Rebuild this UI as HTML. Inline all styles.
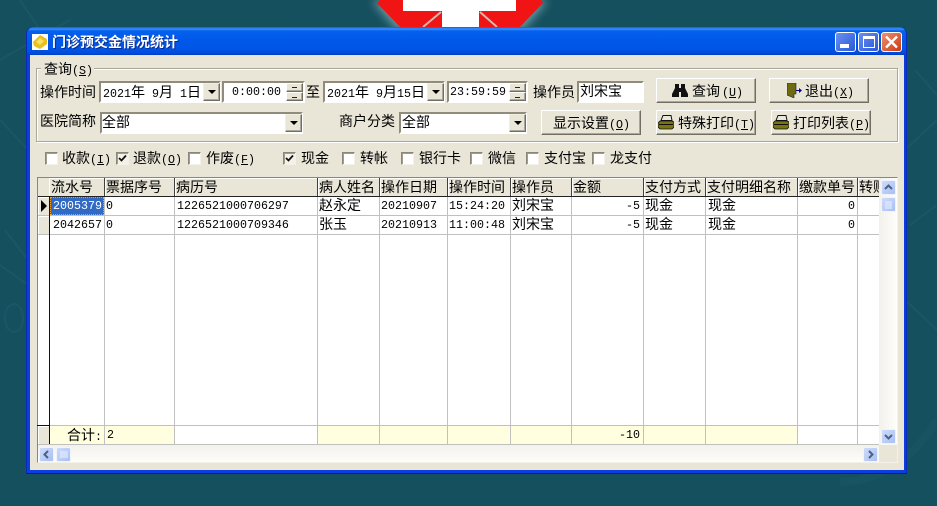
<!DOCTYPE html>
<html><head><meta charset="utf-8">
<style>
html,body{margin:0;padding:0}
body{width:937px;height:506px;overflow:hidden;background:#15505f;position:relative;font-family:"Liberation Sans","WenQuanYi Zen Hei","Noto Sans CJK SC",sans-serif;font-size:14px;color:#000}
div,span.a{position:absolute;box-sizing:border-box}
.t{white-space:nowrap;line-height:16px;height:16px}
.d{font-family:"Liberation Mono",monospace;font-size:11.67px}
.u{text-decoration:underline}
.in{background:#fff;border:2px solid;border-color:#8f8c7c #fff #fff #8f8c7c}
.bt{background:#e9e6d8;border:1px solid;border-color:#fff #716f64 #716f64 #fff;box-shadow:inset -1px -1px 0 #aca899}
.dd{background:#e9e6d8;border:1px solid;border-color:#f1efe2 #716f64 #716f64 #f1efe2;box-shadow:inset -1px -1px 0 #aca899}
.dd:after{content:"";position:absolute;left:4px;top:6px;border:4px solid transparent;border-top:4px solid #000;border-bottom:0}
.cb{width:13px;height:13px;background:#fff;border:1px solid;border-color:#8a8778 #f4f2e8 #f4f2e8 #8a8778;box-shadow:inset 1px 1px 0 #a09d8e}
.cb.c{background:#f4f2e8}
.vl{width:1px;background:#c0c0c0;top:178px;height:266px}
.hl{height:1px;background:#c0c0c0;left:38px;width:841px}
.hd{background:#e9e6d8;top:178px;height:18px;border-right:1px solid #404040;border-left:1px solid #fff;box-shadow:inset 0 1px 0 #fff}
.y{background:#ffffdf;top:426px;height:18px}
.xb{background:linear-gradient(135deg,#cddbfb,#a9c0f4);border:1px solid #eef3fd;border-radius:2px}
.w{border:1px solid #fff;border-radius:3px;top:32px;height:20px}
</style></head><body>

<svg style="position:absolute;left:0;top:0" width="937" height="506">
<defs><filter id="b"><feGaussianBlur stdDeviation="5"/></filter></defs>
<g stroke="#2a6676" stroke-width="2" fill="none" opacity=".3">
<path d="M0 60 L70 20 M20 0 L60 60 M0 120 L28 150 M5 230 L28 260 M28 285 L0 265"/>
<path d="M905 150 L937 120 M910 225 L937 205 M905 300 L937 330 M915 70 L937 95"/>
<path d="M840 482 Q900 480 937 420" stroke-width="8" opacity=".6"/>
<ellipse cx="14" cy="318" rx="9" ry="14"/>
</g>
<polygon points="372,0 548,0 522,30 398,30" fill="#9fc4c8" filter="url(#b)" opacity=".7"/>
<polygon points="377,3 380,0 541,0 543,3 520,27 400,27" fill="#f01414"/>
<polygon points="403,0 516,0 516,11 479,11 479,27 442,27 442,11 403,11" fill="#fff"/>
<path d="M441 12 L423 27 M480 12 L497 27" stroke="#d8b8b0" stroke-width="2"/>
</svg>

<!-- window frame -->
<div style="left:26px;top:27px;width:881px;height:447px;background:#0a3ee0;border-radius:7px 7px 0 0;border-bottom:1px solid #001a90;border-left:1px solid #0a2ab8;border-right:1px solid #0a2ab8"></div>
<div style="left:27px;top:27px;width:879px;height:28px;border-radius:7px 7px 0 0;background:linear-gradient(#0a5be6 0,#3a90ff 2px,#0560ee 4px,#0058e8 14px,#0055e6 22px,#0048d8 27px,#0038b8 28px)"></div>
<div style="left:30px;top:55px;width:874px;height:415px;background:#e9e6d8"></div>

<!-- title -->
<div style="left:32px;top:34px;width:16px;height:16px;background:#fff"></div>
<svg style="position:absolute;left:32px;top:34px" width="16" height="16"><polygon points="1,8 8,1 15,5 15,10 8,15 2,12" fill="#e8c020"/><polygon points="4,8 8,4 12,7 8,11" fill="#f8e060"/></svg>
<div class="t" style="left:53px;top:35px;color:#0a2a90;font-weight:bold">门诊预交金情况统计</div>
<div class="t" style="left:52px;top:34px;color:#fff;font-weight:bold">门诊预交金情况统计</div>

<div class="w" style="left:835px;width:21px;background:linear-gradient(135deg,#6a90f0,#2a58d8)"></div>
<div style="left:840px;top:44px;width:9px;height:4px;background:#fff"></div>
<div class="w" style="left:858px;width:21px;background:linear-gradient(135deg,#6a90f0,#2a58d8)"></div>
<div style="left:863px;top:36px;width:12px;height:12px;border:1px solid #fff;border-top:3px solid #fff"></div>
<div class="w" style="left:881px;width:21px;background:linear-gradient(135deg,#f09070,#c83a14)"></div>
<svg style="position:absolute;left:881px;top:32px" width="21" height="20"><path d="M5 4.500L16 15.500M16 4.500L5 15.500" stroke="#fff" stroke-width="2.400"/></svg>

<!-- group box -->
<div style="left:36px;top:68px;width:862px;height:74px;border:1px solid #aca899;box-shadow:1px 1px 0 #fff,inset 1px 1px 0 #fff"></div>
<div class="t" style="left:41px;top:61px;width:53px;padding-left:3px;background:#e9e6d8">查询<span class="d">(<span class="u">S</span>)</span></div>

<div class="t" style="left:40px;top:84px">操作时间</div>
<div class="in" style="left:99px;top:81px;width:122px;height:22px"></div>
<div class="t" style="left:103px;top:84px"><span class="d">2021</span>年<span class="d">&nbsp;9</span>月<span class="d">&nbsp;1</span>日</div>
<div class="dd" style="left:203px;top:83px;width:17px;height:18px"></div>

<div class="in" style="left:222px;top:81px;width:83px;height:22px"></div>
<div class="t d" style="left:232px;top:84px">0:00:00</div>
<div class="bt" style="left:286px;top:83px;width:17px;height:9px"></div>
<div class="bt" style="left:286px;top:92px;width:17px;height:9px"></div>
<div style="left:292px;top:87px;width:5px;height:1px;background:#222"></div>
<div style="left:292px;top:97px;width:5px;height:1px;background:#222"></div>

<div class="t" style="left:306px;top:84px">至</div>
<div class="in" style="left:323px;top:81px;width:122px;height:22px"></div>
<div class="t" style="left:327px;top:84px"><span class="d">2021</span>年<span class="d">&nbsp;9</span>月<span class="d">15</span>日</div>
<div class="dd" style="left:427px;top:83px;width:17px;height:18px"></div>

<div class="in" style="left:447px;top:81px;width:81px;height:22px"></div>
<div class="t d" style="left:450px;top:84px">23:59:59</div>
<div class="bt" style="left:509px;top:83px;width:17px;height:9px"></div>
<div class="bt" style="left:509px;top:92px;width:17px;height:9px"></div>
<div style="left:515px;top:87px;width:5px;height:1px;background:#222"></div>
<div style="left:515px;top:97px;width:5px;height:1px;background:#222"></div>

<div class="t" style="left:533px;top:84px">操作员</div>
<div class="in" style="left:577px;top:81px;width:67px;height:22px"></div>
<div class="t" style="left:580px;top:83px">刘宋宝</div>

<div class="bt" style="left:656px;top:78px;width:100px;height:25px"></div>
<svg style="position:absolute;left:672px;top:84px" width="16" height="13"><path d="M3 0h4v4h2V0h4v4l3 6v3H9V8H7v5H0v-3l3-6z" fill="#111"/></svg>
<div class="t" style="left:692px;top:83px">查询<span class="d" style="margin-left:2px">(<span class="u">U</span>)</span></div>

<div class="bt" style="left:769px;top:78px;width:100px;height:25px"></div>
<svg style="position:absolute;left:787px;top:83px" width="16" height="15"><path d="M0 0h9v11H7v4L0 12z" fill="#6e6a10" stroke="#222" stroke-width=".6"/><path d="M9 7h3V5l3 2.500-3 2.500V8H9z" fill="#000090"/></svg>
<div class="t" style="left:805px;top:83px">退出<span class="d">(<span class="u">X</span>)</span></div>

<div class="t" style="left:40px;top:113px">医院简称</div>
<div class="in" style="left:100px;top:112px;width:203px;height:22px"></div>
<div class="t" style="left:102px;top:114px">全部</div>
<div class="dd" style="left:285px;top:114px;width:17px;height:18px"></div>

<div class="t" style="left:339px;top:113px">商户分类</div>
<div class="in" style="left:399px;top:112px;width:128px;height:22px"></div>
<div class="t" style="left:402px;top:114px">全部</div>
<div class="dd" style="left:509px;top:114px;width:17px;height:18px"></div>

<div class="bt" style="left:541px;top:110px;width:100px;height:25px"></div>
<div class="t" style="left:553px;top:115px">显示设置<span class="d">(<span class="u">O</span>)</span></div>

<div class="bt" style="left:656px;top:110px;width:100px;height:25px"></div>
<svg style="position:absolute;left:658px;top:115px" width="16" height="15"><path d="M5 0.500h8l1 5H3z" fill="#e8e8e0" stroke="#111"/><path d="M0 8l2-2h12l2 1v5l-2 2H2l-2-2z" fill="#7a7410" stroke="#111" stroke-width=".8"/><path d="M1 9.500h14" stroke="#111"/></svg>
<div class="t" style="left:678px;top:115px">特殊打印<span class="d">(<span class="u">T</span>)</span></div>

<div class="bt" style="left:771px;top:110px;width:100px;height:25px"></div>
<svg style="position:absolute;left:773px;top:115px" width="16" height="15"><path d="M5 0.500h8l1 5H3z" fill="#e8e8e0" stroke="#111"/><path d="M0 8l2-2h12l2 1v5l-2 2H2l-2-2z" fill="#7a7410" stroke="#111" stroke-width=".8"/><path d="M1 9.500h14" stroke="#111"/></svg>
<div class="t" style="left:793px;top:115px">打印列表<span class="d">(<span class="u">P</span>)</span></div>

<!-- checkboxes -->
<div class="cb" style="left:45px;top:152px"></div><div class="t" style="left:62px;top:150px">收款<span class="d">(<span class="u">I</span>)</span></div>
<div class="cb c" style="left:116px;top:152px"></div><div class="t" style="left:133px;top:150px">退款<span class="d">(<span class="u">O</span>)</span></div>
<div class="cb" style="left:188px;top:152px"></div><div class="t" style="left:206px;top:150px">作废<span class="d">(<span class="u">F</span>)</span></div>
<div class="cb c" style="left:283px;top:152px"></div><div class="t" style="left:301px;top:150px">现金</div>
<div class="cb" style="left:342px;top:152px"></div><div class="t" style="left:360px;top:150px">转帐</div>
<div class="cb" style="left:401px;top:152px"></div><div class="t" style="left:419px;top:150px">银行卡</div>
<div class="cb" style="left:470px;top:152px"></div><div class="t" style="left:488px;top:150px">微信</div>
<div class="cb" style="left:526px;top:152px"></div><div class="t" style="left:544px;top:150px">支付宝</div>
<div class="cb" style="left:592px;top:152px"></div><div class="t" style="left:610px;top:150px">龙支付</div>
<svg style="position:absolute;left:116px;top:152px" width="13" height="13"><path d="M3 6l2.500 2.500L10 3.500" stroke="#111" stroke-width="1.800" fill="none"/></svg>
<svg style="position:absolute;left:283px;top:152px" width="13" height="13"><path d="M3 6l2.500 2.500L10 3.500" stroke="#111" stroke-width="1.800" fill="none"/></svg>

<!-- grid -->
<div style="left:37px;top:177px;width:861px;height:286px;background:#f8f7f2;border:1px solid;border-color:#8a8778 #f4f2e8 #f4f2e8 #8a8778"></div>
<div style="left:38px;top:178px;width:841px;height:266px;background:#fff"></div>

<!-- footer yellow -->
<div class="y" style="left:50px;width:124px"></div>
<div class="y" style="left:318px;width:479px"></div>

<!-- indicator col -->
<div style="left:38px;top:178px;width:12px;height:18px;background:#e9e6d8"></div>
<div style="left:38px;top:197px;width:11px;height:18px;background:#e9e6d8;box-shadow:inset 1px 1px 0 #fff"></div>
<div style="left:38px;top:216px;width:11px;height:18px;background:#e9e6d8;box-shadow:inset 1px 1px 0 #fff"></div>
<div style="left:38px;top:426px;width:11px;height:18px;background:#e9e6d8;box-shadow:inset 1px 1px 0 #fff"></div>
<div style="left:41px;top:200px;border:6px solid transparent;border-left:6px solid #000;border-right:0"></div>

<!-- grid lines -->
<div class="vl" style="left:104px"></div><div class="vl" style="left:174px"></div><div class="vl" style="left:317px"></div>
<div class="vl" style="left:379px"></div><div class="vl" style="left:447px"></div><div class="vl" style="left:510px"></div>
<div class="vl" style="left:571px"></div><div class="vl" style="left:643px"></div><div class="vl" style="left:705px"></div>
<div class="vl" style="left:797px"></div><div class="vl" style="left:857px"></div>
<div class="hl" style="top:215px"></div><div class="hl" style="top:234px"></div><div class="hl" style="top:425px"></div><div class="hl" style="top:444px"></div>

<!-- header -->
<div class="hd" style="left:49px;width:56px"></div><div class="hd" style="left:105px;width:70px"></div>
<div class="hd" style="left:175px;width:143px"></div><div class="hd" style="left:318px;width:62px"></div>
<div class="hd" style="left:380px;width:68px"></div><div class="hd" style="left:448px;width:63px"></div>
<div class="hd" style="left:511px;width:61px"></div><div class="hd" style="left:572px;width:72px"></div>
<div class="hd" style="left:644px;width:62px"></div><div class="hd" style="left:706px;width:92px"></div>
<div class="hd" style="left:798px;width:60px"></div><div class="hd" style="left:858px;width:21px;border-right:0;overflow:hidden"></div>
<div style="left:38px;top:196px;width:841px;height:1px;background:#222"></div>
<div style="left:49px;top:196px;width:1px;height:248px;background:#111"></div>
<div style="left:37px;top:425px;width:13px;height:1px;background:#111"></div>

<div class="t" style="left:51px;top:179px">流水号</div>
<div class="t" style="left:106px;top:179px">票据序号</div>
<div class="t" style="left:176px;top:179px">病历号</div>
<div class="t" style="left:319px;top:179px">病人姓名</div>
<div class="t" style="left:381px;top:179px">操作日期</div>
<div class="t" style="left:449px;top:179px">操作时间</div>
<div class="t" style="left:512px;top:179px">操作员</div>
<div class="t" style="left:573px;top:179px">金额</div>
<div class="t" style="left:645px;top:179px">支付方式</div>
<div class="t" style="left:707px;top:179px">支付明细名称</div>
<div class="t" style="left:799px;top:179px">缴款单号</div>
<div class="t" style="left:859px;top:179px;width:20px;overflow:hidden">转账</div>

<!-- row 1 -->
<div style="left:50px;top:197px;width:54px;height:18px;background:#316ac5;border:1px dotted #f0a030"></div>
<div class="t d" style="left:53px;top:198px;color:#fff">2005379</div>
<div class="t d" style="left:106px;top:198px">0</div>
<div class="t d" style="left:177px;top:198px">1226521000706297</div>
<div class="t" style="left:319px;top:197px">赵永定</div>
<div class="t d" style="left:381px;top:198px">20210907</div>
<div class="t d" style="left:449px;top:198px">15:24:20</div>
<div class="t" style="left:512px;top:197px">刘宋宝</div>
<div class="t d" style="left:626px;top:198px">-5</div>
<div class="t" style="left:645px;top:197px">现金</div>
<div class="t" style="left:708px;top:197px">现金</div>
<div class="t d" style="left:848px;top:198px">0</div>

<!-- row 2 -->
<div class="t d" style="left:53px;top:217px">2042657</div>
<div class="t d" style="left:106px;top:217px">0</div>
<div class="t d" style="left:177px;top:217px">1226521000709346</div>
<div class="t" style="left:319px;top:216px">张玉</div>
<div class="t d" style="left:381px;top:217px">20210913</div>
<div class="t d" style="left:449px;top:217px">11:00:48</div>
<div class="t" style="left:512px;top:216px">刘宋宝</div>
<div class="t d" style="left:626px;top:217px">-5</div>
<div class="t" style="left:645px;top:216px">现金</div>
<div class="t" style="left:708px;top:216px">现金</div>
<div class="t d" style="left:848px;top:217px">0</div>

<!-- footer -->
<div class="t" style="left:67px;top:427px">合计<span class="d">:</span></div>
<div class="t d" style="left:107px;top:427px">2</div>
<div class="t d" style="left:619px;top:427px">-10</div>

<!-- vertical scrollbar -->
<div style="left:879px;top:178px;width:18px;height:266px;background:linear-gradient(90deg,#f3f1ec,#fdfdfa)"></div>
<div class="xb" style="left:881px;top:180px;width:15px;height:15px"></div>
<svg style="position:absolute;left:881px;top:180px" width="15" height="15"><path d="M4 9l3.500-3.500L11 9" stroke="#4d6185" stroke-width="2" fill="none"/></svg>
<div class="xb" style="left:881px;top:197px;width:15px;height:15px"></div>
<svg style="position:absolute;left:881px;top:197px" width="15" height="15"><path d="M4 5h7M4 7h7M4 9h7M4 11h7" stroke="#eef3fd" stroke-width="1"/></svg>
<div class="xb" style="left:881px;top:429px;width:15px;height:15px"></div>
<svg style="position:absolute;left:881px;top:429px" width="15" height="15"><path d="M4 6l3.500 3.500L11 6" stroke="#4d6185" stroke-width="2" fill="none"/></svg>

<!-- horizontal scrollbar -->
<div style="left:38px;top:445px;width:842px;height:17px;background:linear-gradient(#f3f1ec,#fdfdfa)"></div>
<div style="left:879px;top:445px;width:18px;height:17px;background:#e9e6d8"></div>
<div class="xb" style="left:39px;top:447px;width:15px;height:15px"></div>
<svg style="position:absolute;left:39px;top:447px" width="15" height="15"><path d="M9 4L5.500 7.500 9 11" stroke="#4d6185" stroke-width="2" fill="none"/></svg>
<div class="xb" style="left:56px;top:447px;width:15px;height:15px"></div>
<svg style="position:absolute;left:56px;top:447px" width="15" height="15"><path d="M5 4v7M7 4v7M9 4v7M11 4v7" stroke="#eef3fd" stroke-width="1"/></svg>
<div class="xb" style="left:863px;top:447px;width:15px;height:15px"></div>
<svg style="position:absolute;left:863px;top:447px" width="15" height="15"><path d="M6 4l3.500 3.500L6 11" stroke="#4d6185" stroke-width="2" fill="none"/></svg>

</body></html>
